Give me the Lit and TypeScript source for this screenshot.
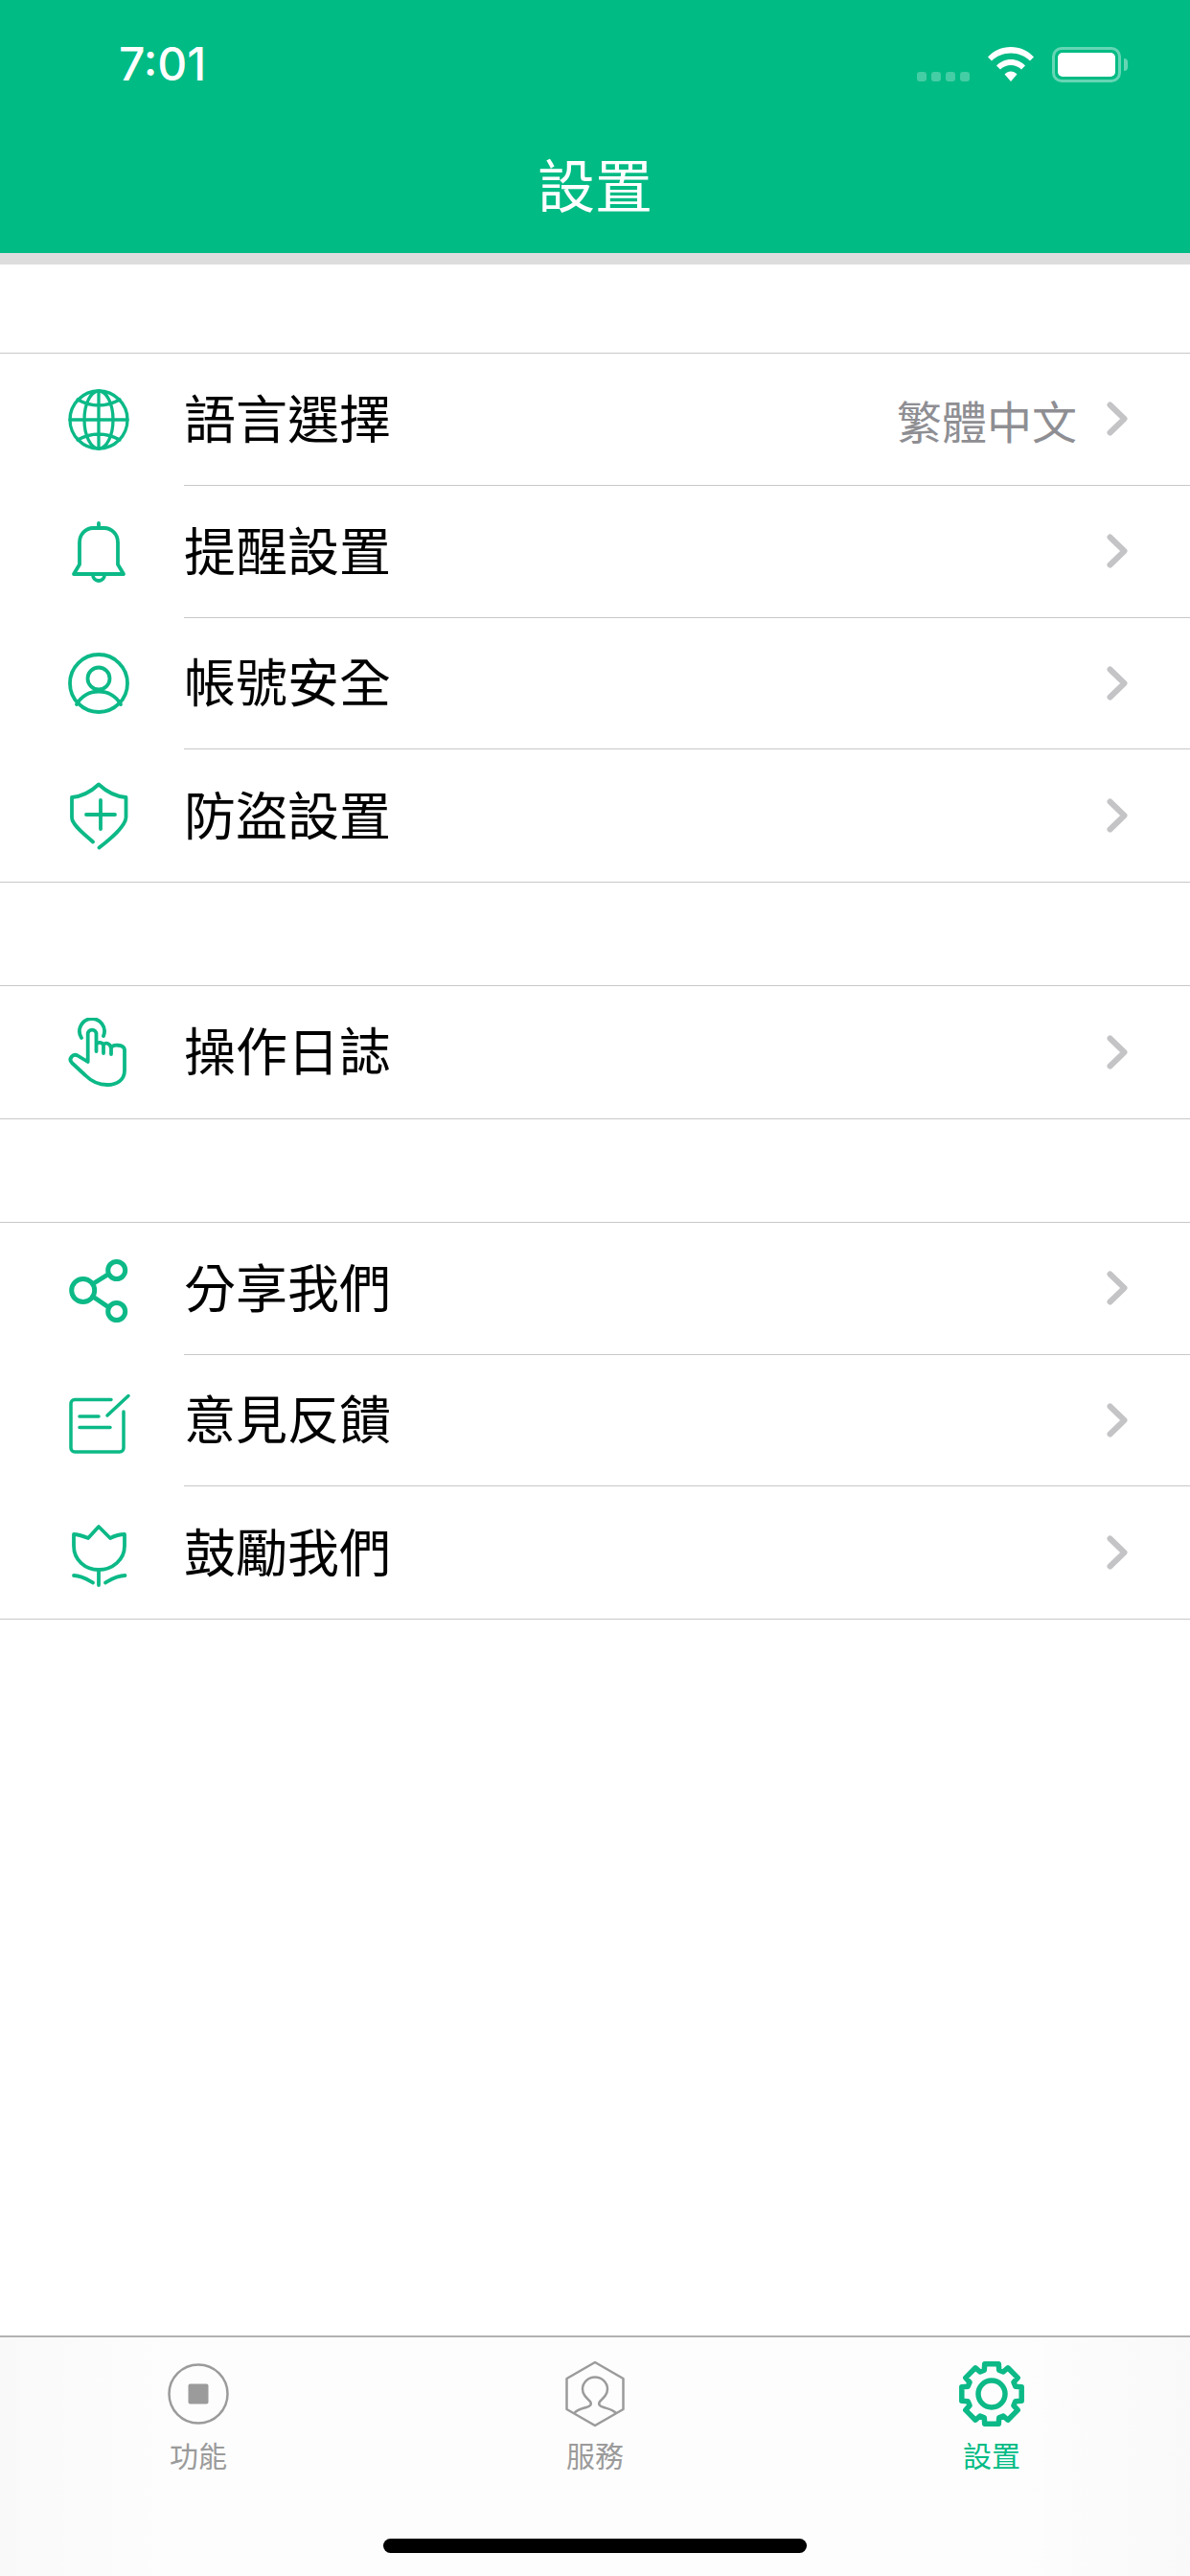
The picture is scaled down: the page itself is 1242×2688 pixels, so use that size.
import { LitElement, html, css, svg } from 'lit';
import { customElement } from 'lit/decorators.js';

const icons = {
  globe: svg`
    <circle cx="36" cy="36" r="30" />
    <ellipse cx="36" cy="36" rx="15" ry="30" />
    <path d="M36 6V66M6 36H66M14 15Q36 27 58 15M14 57Q36 45 58 57" />`,
  bell: svg`
    <path d="M10 59L16 49V26C16 17 23 11 30 11H42C49 11 56 17 56 26V49L62 59Z" />
    <path d="M36 6V11M30 60a6 6 0 0 0 12 0" />`,
  user: svg`
    <circle cx="36" cy="36" r="30" />
    <circle cx="36" cy="31" r="11.500" />
    <path d="M13 58C18 49 27 44.500 36 44.500C45 44.500 54 49 59 58" />`,
  shield: svg`
    <path d="M30 63.500C22 56 8 46 8 38V17C20 16 28 11 36 3.500C44 11 52 16 64.500 17V38C64 48 46 62 36.500 69.500" />
    <path d="M23 35H53M38 20V50" />`,
  hand: svg`
    <path d="M18 21A13 13 0 1 1 41 19" />
    <path d="M33.500 35V17a4.400 4.400 0 0 0-8.800 0V46L14 39.500C9 37 4 43 8 47L22 60C28 66 35 70 45 70C55 70 63 65 63 55V33C62 28 50 27 49 32V38M49 32C48 26 42 25 41 29V37M41 29C40 25 35 25 33.500 28" />`,
  share: svg`
    <circle cx="19.700" cy="37.500" r="12" />
    <circle cx="54.700" cy="16.500" r="9" />
    <circle cx="54.700" cy="59.500" r="9" />
    <path d="M31 30L45.500 21M30 44L45.500 54.500" />`,
  note: svg`
    <path d="M49 14.500H11a4 4 0 0 0-4 4V65a4 4 0 0 0 4 4H58a4 4 0 0 0 4-4V27" />
    <path d="M45 31L67 10.500M16 32H36M16 43.500H48" />`,
  tulip: svg`
    <path d="M36 9L25 21C20 19 15 17 10 17V29C10 44 22 54 36 54C50 54 63 44 63 29V17C57 17 52 19 48 21Z" />
    <path d="M36 54V70M10 60C18 60 24 64 30 67.500M63.500 60C55 60 49 64 43 67.500" />`,
};

type Row = { icon: keyof typeof icons; label: string; value?: string };

const sections: Row[][] = [
  [
    { icon: 'globe', label: '語言選擇', value: '繁體中文' },
    { icon: 'bell', label: '提醒設置' },
    { icon: 'user', label: '帳號安全' },
    { icon: 'shield', label: '防盜設置' },
  ],
  [{ icon: 'hand', label: '操作日誌' }],
  [
    { icon: 'share', label: '分享我們' },
    { icon: 'note', label: '意見反饋' },
    { icon: 'tulip', label: '鼓勵我們' },
  ],
];

// 8 toothed outline for the active tab icon
function gearPath() {
  const teeth = 8;
  const parts: string[] = [];
  for (let i = 0; i < teeth; i++) {
    const a = (i * Math.PI * 2) / teeth - Math.PI / 2;
    const pts: [number, number][] = [
      [26, -0.3],
      [32, -0.23],
      [32, 0.23],
      [26, 0.3],
    ];
    for (const [r, d] of pts) {
      const x = 36 + r * Math.cos(a + d);
      const y = 36 + r * Math.sin(a + d);
      parts.push(`${parts.length ? 'L' : 'M'}${x.toFixed(1)} ${y.toFixed(1)}`);
    }
  }
  return parts.join('') + 'Z';
}

@customElement('app-root')
export class AppRoot extends LitElement {
  static styles = css`
    :host {
      display: flex;
      flex-direction: column;
      height: 2688px;
      background: #fff;
      font-family: 'Noto Sans CJK TC', 'Noto Sans', sans-serif;
      --green: #00bb84;
    }

    .header {
      background: var(--green);
      height: 264px;
      border-bottom: 12px solid #ddd;
      color: #fff;
      display: flex;
      flex-direction: column;
      flex: none;
    }

    .status {
      height: 134px;
      display: flex;
      align-items: center;
      padding: 0 65px 0 124px;
    }

    .time {
      font-family: Inter, sans-serif;
      font-weight: 500;
      font-size: 48px;
      line-height: 1;
      flex: 1;
    }

    .dots {
      display: flex;
      gap: 5px;
      align-self: flex-end;
      margin-bottom: 49px;
    }

    .dots i {
      width: 10px;
      height: 10px;
      border-radius: 3px;
      background: rgba(255, 255, 255, 0.27);
    }

    .wifi {
      margin-left: 19px;
      width: 48px;
      height: 36px;
      fill: #fff;
    }

    .battery {
      margin-left: 19px;
      width: 72px;
      height: 37px;
      box-sizing: border-box;
      border: 3px solid rgba(255, 255, 255, 0.4);
      border-radius: 10px;
      padding: 3px;
      display: flex;
    }

    .battery b {
      flex: 1;
      background: #fff;
      border-radius: 5px;
    }

    .nub {
      margin-left: 3px;
      width: 4px;
      height: 13px;
      background: rgba(255, 255, 255, 0.4);
      border-radius: 0 4px 4px 0;
    }

    .title {
      font-size: 60px;
      line-height: 60px;
      text-align: center;
      margin-top: 27px;
    }

    .list {
      flex: 1;
      display: flex;
      flex-direction: column;
      gap: 107px;
      padding-top: 92px;
    }

    .section {
      border-top: 1px solid #c8c8c8;
      border-bottom: 1px solid #c8c8c8;
    }

    .row {
      display: flex;
      align-items: center;
      height: 137.75px;
      padding-left: 67px;
    }

    .row svg.icon {
      width: 72px;
      height: 72px;
      flex: none;
      margin-right: 53px;
      fill: none;
      stroke: #0cb987;
      stroke-width: 3.800;
      stroke-linecap: round;
      stroke-linejoin: round;
    }

    .row svg.globe {
      stroke-width: 3.300;
    }

    .row svg.note {
      stroke-width: 3.500;
    }

    .row svg.share {
      stroke-width: 5;
    }

    .content {
      flex: 1;
      align-self: stretch;
      display: flex;
      align-items: center;
      padding-right: 65px;
      border-bottom: 1px solid #c8c8c8;
    }

    .row:last-child .content {
      border-bottom: none;
    }

    .label {
      flex: 1;
      font-size: 54px;
      color: #000;
      margin-bottom: 6px;
    }

    .value {
      font-size: 47px;
      color: #8e8e93;
      margin-right: 31px;
    }

    .chevron {
      width: 22px;
      height: 36px;
      fill: none;
      stroke: #c4c4c7;
      stroke-width: 6;
      stroke-linecap: round;
      stroke-linejoin: round;
    }

    .tabbar {
      flex: none;
      height: 251px;
      box-sizing: border-box;
      border-top: 2px solid #b2b2b2;
      background: linear-gradient(90deg, #f9f9f9, #fdfdfd 15%, #fdfdfd 85%, #f9f9f9);
      display: flex;
      flex-direction: column;
      align-items: center;
    }

    .tabs {
      align-self: stretch;
      display: grid;
      grid-template-columns: repeat(3, 1fr);
      padding-top: 23px;
    }

    .tab {
      display: flex;
      flex-direction: column;
      align-items: center;
      color: #9b9b9b;
      font-size: 30px;
      line-height: 40px;
    }

    .tab svg {
      width: 72px;
      height: 72px;
      fill: none;
      stroke: #9b9b9b;
      stroke-width: 2.500;
      stroke-linejoin: round;
      margin-bottom: 7px;
    }

    .tab.active {
      color: var(--green);
    }

    .tab.active svg {
      stroke: #0cb987;
      stroke-width: 5.500;
    }

    .home {
      width: 442px;
      height: 15px;
      border-radius: 8px;
      background: #000;
      margin-top: 68px;
    }
  `;

  renderRow(row: Row) {
    return html`
      <div class="row">
        <svg class="icon ${row.icon}" viewBox="0 0 72 72">${icons[row.icon]}</svg>
        <div class="content">
          <span class="label">${row.label}</span>
          ${row.value ? html`<span class="value">${row.value}</span>` : ''}
          <svg class="chevron" viewBox="0 0 22 36"><path d="M3.500 3.500L18.500 18L3.500 32.500" /></svg>
        </div>
      </div>
    `;
  }

  render() {
    return html`
      <div class="header">
        <div class="status">
          <span class="time">7:01</span>
          <div class="dots"><i></i><i></i><i></i><i></i></div>
          <svg class="wifi" viewBox="0 0 48 36">
            <path d="M0 10.500C6 4 14.500 0 24 0C33.500 0 42 4 48 10.500L44 14.500C39 9.500 32 6.500 24 6.500C16 6.500 9 9.500 4 14.500Z" />
            <path d="M9 19.500C13 15.500 18 13 24 13C30 13 35 15.500 39 19.500L35 23.500C32 20.500 28 19 24 19C20 19 16 20.500 13 23.500Z" />
            <path d="M17.500 28.500C19.500 26.500 21.500 25.500 24 25.500C26.500 25.500 28.500 26.500 30.500 28.500L24 36Z" />
          </svg>
          <div class="battery"><b></b></div>
          <div class="nub"></div>
        </div>
        <div class="title">設置</div>
      </div>

      <div class="list">
        ${sections.map((rows) => html`<div class="section">${rows.map((r) => this.renderRow(r))}</div>`)}
      </div>

      <div class="tabbar">
        <div class="tabs">
          <div class="tab">
            <svg viewBox="0 0 72 72">
              <circle cx="36" cy="36" r="30.500" />
              <rect x="25.500" y="25.500" width="21" height="21" rx="2" fill="#9b9b9b" stroke="none" />
            </svg>
            功能
          </div>
          <div class="tab">
            <svg viewBox="0 0 72 72">
              <path d="M36 3L65.500 20V52L36 69L6.500 52V20Z" />
              <path d="M14.500 56C18 52 24 51 27 50C31 49 33 47 31 44C26 39 23 36 23 31C23 24 29 18.500 36 18.500C43 18.500 49 24 49 31C49 36 46 39 41 44C39 47 41 49 45 50C48 51 54 52 58 56" />
            </svg>
            服務
          </div>
          <div class="tab active">
            <svg viewBox="0 0 72 72">
              <path d=${gearPath()} />
              <circle cx="36" cy="36" r="14" />
            </svg>
            設置
          </div>
        </div>
        <div class="home"></div>
      </div>
    `;
  }
}
